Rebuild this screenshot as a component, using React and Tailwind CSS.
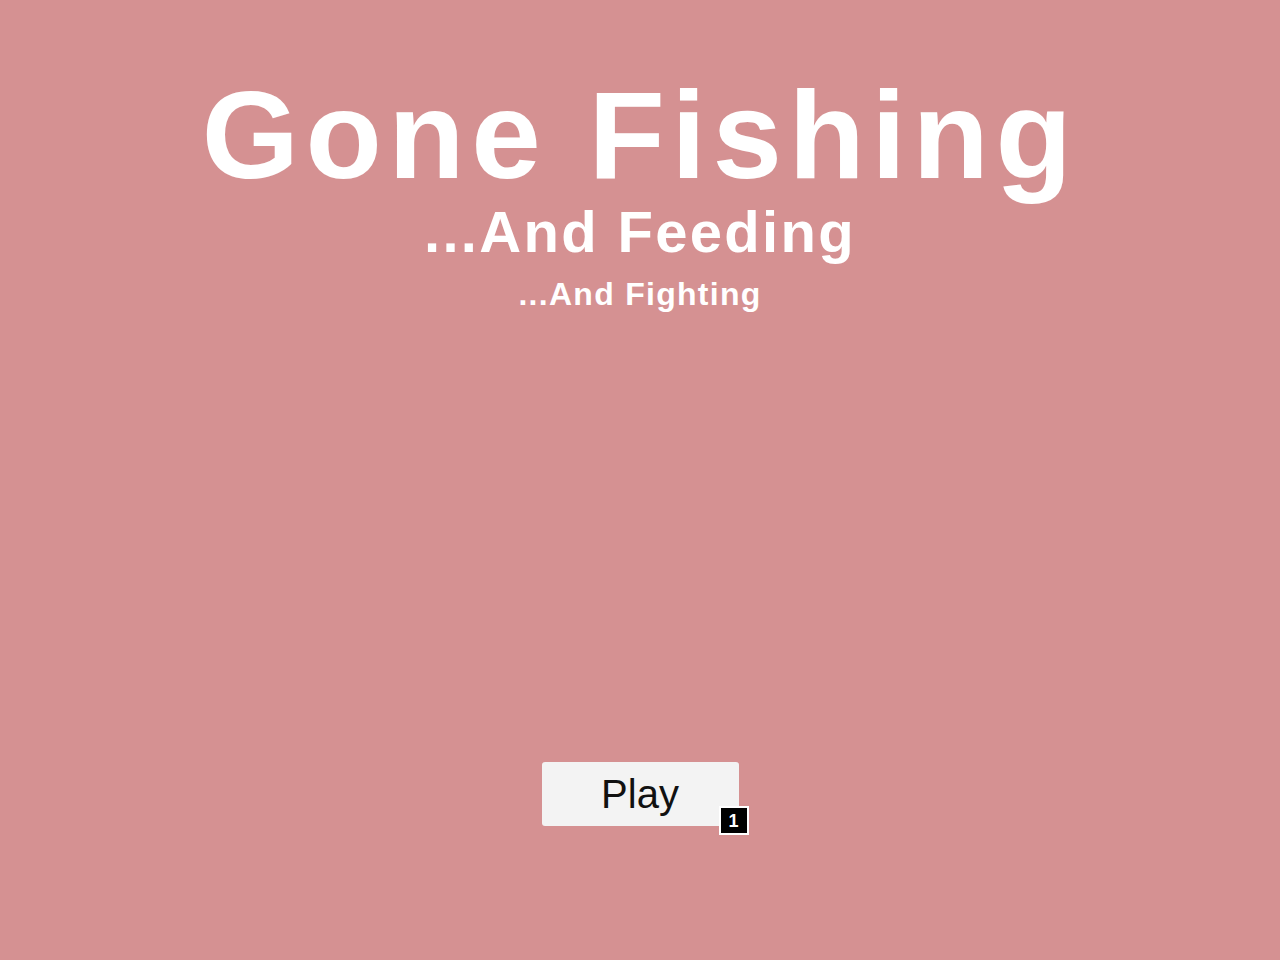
import React from 'react';

// Title screen: stacked headings and a single start button
function PlayButton() {
    return (
        <div className="relative">
            <button className="w-[197px] h-[64px] bg-[#f3f3f3] rounded-[3px] text-[40px] font-normal leading-none text-[#111] font-['Liberation_Sans',Arial,sans-serif]">
                Play
            </button>
            <span className="absolute left-[177px] top-[44px] w-[30px] h-[29px] bg-black border-2 border-white flex items-center justify-center text-white text-[18px] font-bold leading-none font-['Liberation_Sans',Arial,sans-serif]">
                1
            </span>
        </div>
    );
}

export default function App() {
    return (
        <div className="w-full h-screen bg-[#d59192] flex flex-col items-center pt-[72px] text-white font-bold font-['Liberation_Sans',Arial,sans-serif]">
            <h1 className="text-[125px] leading-none tracking-[0.052em]">Gone Fishing</h1>
            <h2 className="mt-[6px] text-[58px] leading-none tracking-[0.04em]">...And Feeding</h2>
            <h3 className="mt-[17px] text-[32px] leading-none tracking-[0.04em]">...And Fighting</h3>
            <div className="mt-[452px]">
                <PlayButton />
            </div>
        </div>
    );
}
